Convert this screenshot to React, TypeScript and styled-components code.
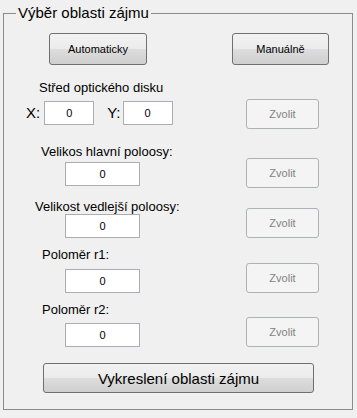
import React from "react";
import styled, { createGlobalStyle } from "styled-components";

const GlobalStyle = createGlobalStyle`
    html, body {
        margin: 0;
        padding: 0;
        background: #f0f0f0;
    }

    body {
        width: 357px;
        height: 418px;
        overflow: hidden;
        font-family: "Liberation Sans", Arial, sans-serif;
        color: #000;
    }
`;

const Frame = styled.fieldset`
    box-sizing: border-box;
    width: 350px;
    height: 406px;
    margin: 4px 0 0 3px;
    padding: 0;
    min-width: 0;
    border: 1px solid #8a8a8a;
`;

const Legend = styled.legend`
    margin-left: 12px;
    padding: 0 2px;
    font-size: 15px;
    line-height: 18px;
`;

const TopRow = styled.div`
    display: flex;
    justify-content: space-between;
    margin: 11px 23px 0 45px;
`;

interface ActionButtonProps
{
    $width: number;
    $height: number;
    $size: number;
}

const ActionButton = styled.button<ActionButtonProps>`
    box-sizing: border-box;
    width: ${p => p.$width}px;
    height: ${p => p.$height}px;
    padding: 0;
    border: 1px solid #707070;
    border-radius: 3px;
    background: linear-gradient(#f2f2f2 0%, #ebebeb 50%, #dddddd 51%, #cfcfcf 100%);
    font-family: "Liberation Sans", Arial, sans-serif;
    font-size: ${p => p.$size}px;
    color: #000;
`;

const WideButton = styled(ActionButton)`
    display: block;
    margin: 16px 0 0 39px;
`;

const Row = styled.div<{ $top: number }>`
    display: flex;
    align-items: flex-end;
    justify-content: space-between;
    margin-top: ${p => p.$top}px;
    padding-right: 33px;
`;

const Field = styled.div`
    display: flex;
    flex-direction: column;
    align-items: flex-start;
`;

const FieldLabel = styled.div<{ $indent: number }>`
    margin-left: ${p => p.$indent}px;
    font-size: 13px;
    line-height: 15px;
    white-space: nowrap;
`;

const ValueBox = styled.input<{ $gap: number }>`
    box-sizing: border-box;
    width: 75px;
    height: 24px;
    margin: ${p => p.$gap}px 0 0 61px;
    padding: 0;
    border: 1px solid #abadb3;
    background: #fff;
    font-family: "Liberation Sans", Arial, sans-serif;
    font-size: 11px;
    text-align: center;
    color: #000;
    outline: none;
`;

const CoordRow = styled.div`
    display: flex;
    align-items: center;
    margin: 6px 0 0 22px;
`;

const AxisLabel = styled.span<{ $before: number; $after: number }>`
    margin: 0 ${p => p.$after}px 0 ${p => p.$before}px;
    font-size: 15px;
    line-height: 24px;
`;

const CoordBox = styled(ValueBox)`
    width: 50px;
    margin: 0;
`;

const PickButton = styled.button<{ $shift: number }>`
    box-sizing: border-box;
    width: 73px;
    height: 30px;
    margin-bottom: -${p => p.$shift}px;
    padding: 0;
    border: 1px solid #adb2b5;
    border-radius: 3px;
    background: #f4f4f4;
    font-family: "Liberation Sans", Arial, sans-serif;
    font-size: 11px;
    color: #838383;
`;

const axes = [
    { name: "Velikos hlavní poloosy:", indent: 37, top: 19, gap: 3, shift: 2 },
    { name: "Velikost vedlejší poloosy:", indent: 31, top: 13, gap: 0, shift: 0 },
    { name: "Poloměr r1:", indent: 38, top: 9, gap: 7, shift: 0 },
    { name: "Poloměr r2:", indent: 38, top: 9, gap: 6, shift: 0 },
];

const App = () =>
(
    <>
        <GlobalStyle />
        <Frame>
            <Legend>Výběr oblasti zájmu</Legend>
            <TopRow>
                <ActionButton $width={98} $height={32} $size={11}>Automaticky</ActionButton>
                <ActionButton $width={97} $height={32} $size={11}>Manuálně</ActionButton>
            </TopRow>
            <Row $top={15}>
                <Field>
                    <FieldLabel $indent={35}>Střed optického disku</FieldLabel>
                    <CoordRow>
                        <AxisLabel $before={0} $after={4}>X:</AxisLabel>
                        <CoordBox $gap={0} readOnly value="0" />
                        <AxisLabel $before={13} $after={2}>Y:</AxisLabel>
                        <CoordBox $gap={0} readOnly value="0" />
                    </CoordRow>
                </Field>
                <PickButton $shift={4} disabled>Zvolit</PickButton>
            </Row>
            {axes.map(a => (
                <Row key={a.name} $top={a.top}>
                    <Field>
                        <FieldLabel $indent={a.indent}>{a.name}</FieldLabel>
                        <ValueBox $gap={a.gap} readOnly value="0" />
                    </Field>
                    <PickButton $shift={a.shift} disabled>Zvolit</PickButton>
                </Row>
            ))}
            <WideButton $width={271} $height={30} $size={15}>Vykreslení oblasti zájmu</WideButton>
        </Frame>
    </>
);

export default App;
